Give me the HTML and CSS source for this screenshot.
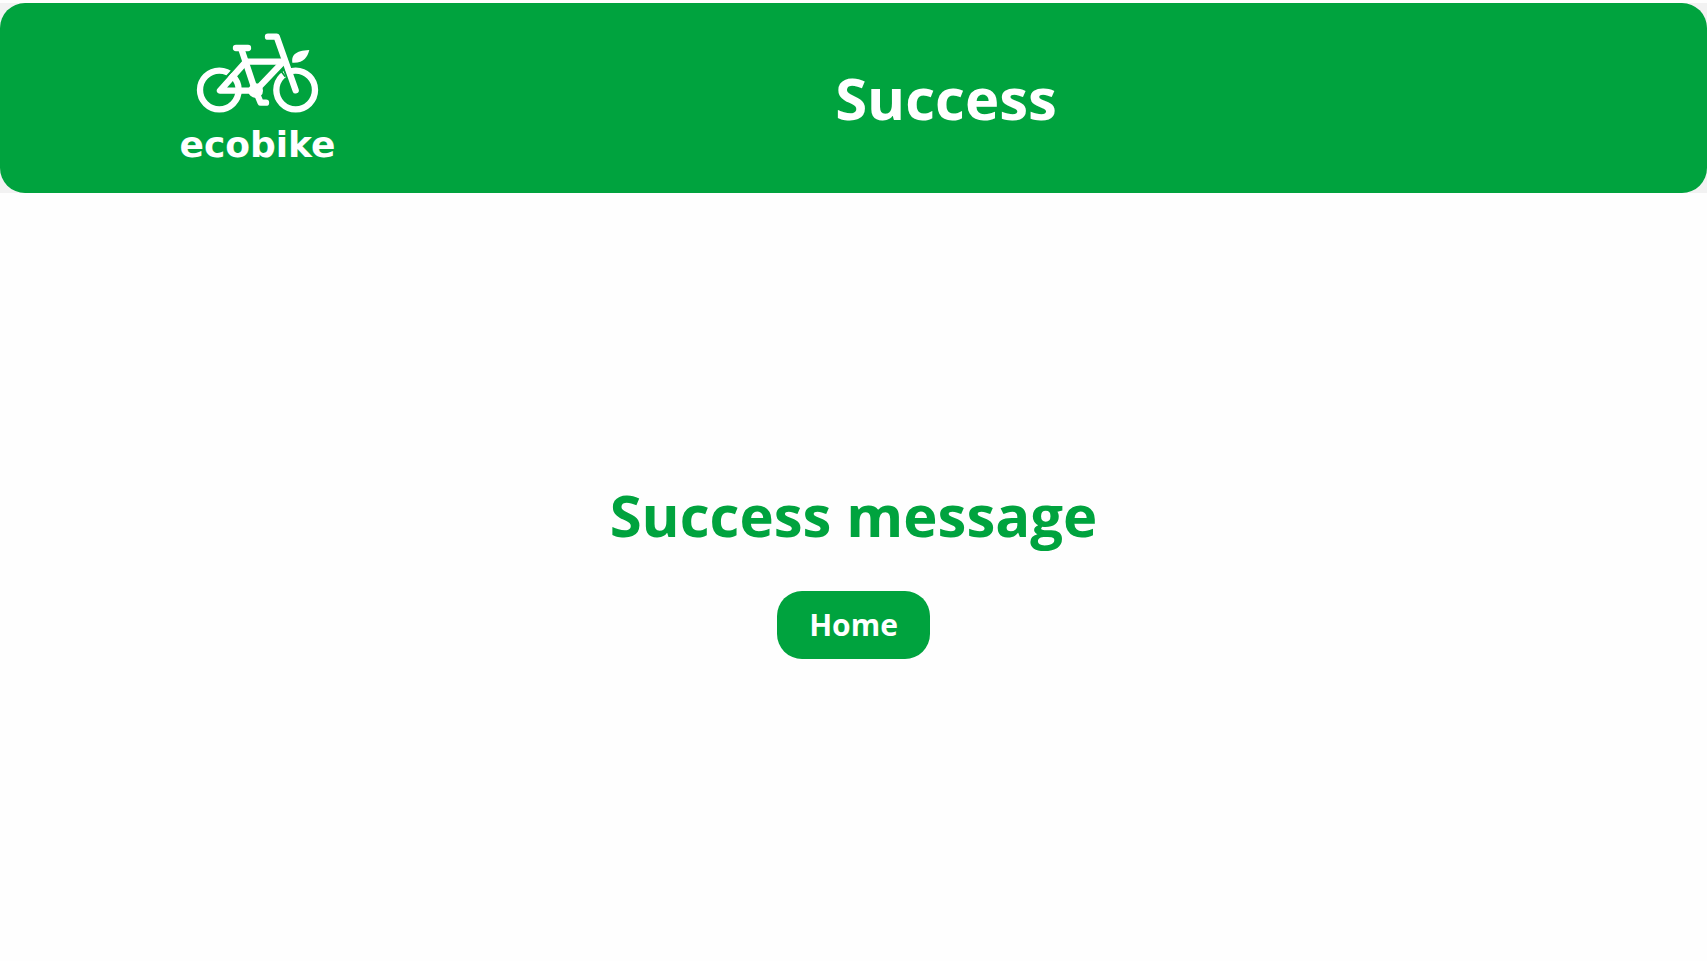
FILE: index.html
```html
<!DOCTYPE html>
<html lang="en">
<head>
<meta charset="utf-8">
<meta name="viewport" content="width=device-width, initial-scale=1">
<title>Success</title>
<link rel="stylesheet" href="styles.css">
</head>
<body>
<div class="header-band">
  <header class="header">
    <div class="logo">
      <svg class="logo-bike" viewBox="78 40 369 240" fill="none" stroke="#fff" stroke-linecap="round" stroke-linejoin="round" aria-hidden="true">
        <g stroke-width="19">
          <circle cx="148" cy="211" r="58"/>
          <circle cx="377" cy="211" r="58"/>
        </g>
        <path d="M166 176L213 124M334 130L357 186" stroke="#00a33e" stroke-width="7" stroke-linecap="butt"/>
        <path d="M184 155L192 165M333 154L346 171" stroke="#00a33e" stroke-width="5" stroke-linecap="butt"/>
        <g stroke-width="19">
          <path d="M198 85H234"/>
          <path d="M214 88L253 205"/>
          <path d="M228 126H340"/>
          <path d="M228 126L150 213H257L340 126"/>
          <path d="M294 51H320L377 212"/>
          <path d="M257 213L272 249H288"/>
        </g>
        <circle cx="257" cy="213" r="22" fill="#fff" stroke="none"/>
        <path d="M367 129C364 108 374 93 418 91C412 113 401 131 367 129Z" fill="#fff" stroke="none"/>
      </svg>
      <span class="logo-name">ecobike</span>
    </div>
    <h1 class="title">Success</h1>
  </header>
</div>
<main class="content">
  <p class="message">Success message</p>
  <button class="home-button" type="button">Home</button>
</main>
</body>
</html>
```
FILE: styles.css
```css
* {
  box-sizing: border-box;
}

body {
  margin: 0;
  min-height: 100vh;
  padding-top: 3px;
  display: flex;
  flex-direction: column;
  background: #fefefe;
  font-family: "Open Sans", "Noto Sans", sans-serif;
  font-weight: 700;
}

.header-band {
  background: #f2f2f2;
}

.header {
  display: grid;
  grid-template-columns: 515fr 862fr 330fr;
  align-items: center;
  min-height: 190px;
  border-radius: 25px;
  background: #00a33e;
  color: #fff;
}

.logo {
  display: flex;
  flex-direction: column;
  align-items: center;
  gap: 14px;
}

.logo-bike {
  width: 123px;
  height: 80px;
}

.logo-name {
  font-family: "DejaVu Sans", sans-serif;
  font-size: 36px;
  line-height: 36px;
}

.title,
.message {
  margin: 0;
  font-size: 58px;
  line-height: 80px;
  text-align: center;
}

.content {
  flex: 1;
  display: flex;
  flex-direction: column;
  align-items: center;
  justify-content: center;
  gap: 36px;
  padding-bottom: 20px;
  color: #00a33e;
}

.home-button {
  padding: 14px 32px;
  border: 0;
  border-radius: 25px;
  background: #00a33e;
  color: #fff;
  font: inherit;
  font-size: 30px;
  line-height: 40px;
  cursor: pointer;
}
```
